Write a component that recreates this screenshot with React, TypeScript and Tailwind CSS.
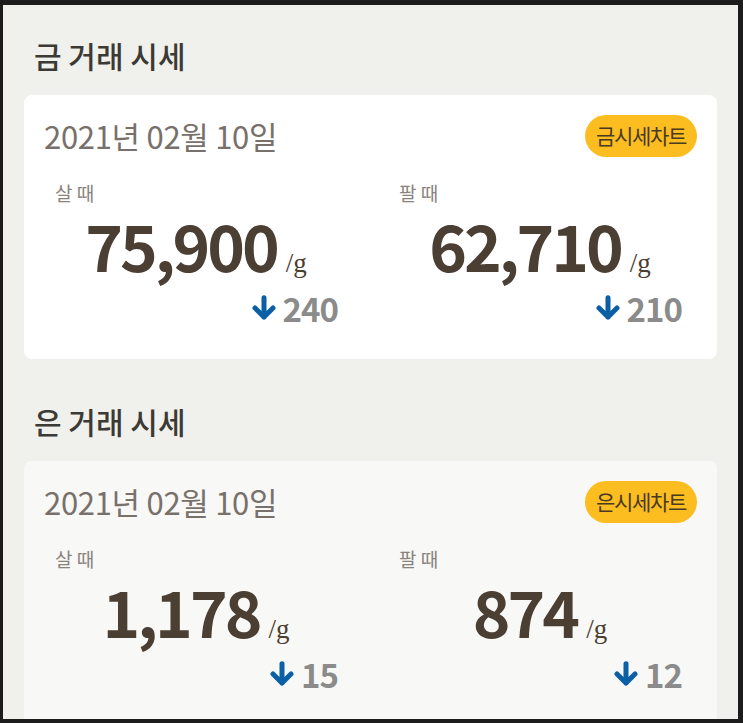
import React from "react";

type Price = {
	label: string;
	value: string;
	change: string;
};

function ArrowDown() {
	return (
		<svg width="24" height="26" viewBox="0 0 24 26" className="shrink-0">
			<path
				d="M12 2.8 V22 M3 13 L12 22 L21 13"
				fill="none"
				stroke="#0b5fa5"
				strokeWidth="5"
				strokeLinecap="round"
				strokeLinejoin="round"
			/>
		</svg>
	);
}

function PriceColumn({ price }: { price: Price }) {
	return (
		<div className="flex flex-col">
			<div className="text-[19px] leading-[22px] text-[#8a837c] pl-[1px]">{price.label}</div>
			<div className="flex items-baseline justify-center mt-[5px] h-[70px]">
				<span className="text-[64px] leading-[70px] font-bold text-[#4b3e33] tracking-[-3px]">
					{price.value}
				</span>
				<span className="ml-[9px] text-[27px] text-[#4b3e33] font-['Liberation_Serif',serif]">/g</span>
			</div>
			<div className="flex items-center justify-end gap-[7px] mt-[11px] h-[36px]">
				<ArrowDown />
				<span className="text-[33px] leading-[36px] font-bold text-[#8b8b8b] tracking-[-1px]">
					{price.change}
				</span>
			</div>
		</div>
	);
}

function MarketSection({
	title,
	badge,
	buy,
	sell,
	cardBg,
	last,
}: {
	title: string;
	badge: string;
	buy: Price;
	sell: Price;
	cardBg: string;
	last?: boolean;
}) {
	return (
		<section className={last ? "" : "mb-[42px]"}>
			<h2 className="text-[30px] leading-[40px] font-medium text-[#3b3a35] pl-[10px] mb-[20px]">{title}</h2>
			<div className={`rounded-[8px] px-5 pt-[20px] pb-[33px] ${cardBg}`}>
				<div className="flex items-center justify-between">
					<div className="text-[31px] leading-[42px] text-[#78706a] tracking-[-0.3px]">2021년 02월 10일</div>
					<div className="h-[42px] px-[11px] rounded-full bg-[#fbbd1f] flex items-center text-[21px] text-[#4a3a22] tracking-[-1.3px]">
						{badge}
					</div>
				</div>
				<div className="grid grid-cols-[284px_284px] gap-x-[60px] pl-[10px] mt-[25px]">
					<PriceColumn price={buy} />
					<PriceColumn price={sell} />
				</div>
			</div>
		</section>
	);
}

export default function App() {
	return (
		<div className="w-[743px] h-[723px] overflow-hidden bg-[#1c1c1c] pt-[5px] pl-[3px] pr-[5px] pb-[4px] font-['Noto_Sans_CJK_KR','Noto_Sans',sans-serif]">
			<div className="h-full overflow-hidden bg-[#f0f0ec] px-[21px] pt-[30px]">
				<MarketSection
					title="금 거래 시세"
					badge="금시세차트"
					buy={{ label: "살 때", value: "75,900", change: "240" }}
					sell={{ label: "팔 때", value: "62,710", change: "210" }}
					cardBg="bg-white"
				/>
				<MarketSection
					title="은 거래 시세"
					badge="은시세차트"
					buy={{ label: "살 때", value: "1,178", change: "15" }}
					sell={{ label: "팔 때", value: "874", change: "12" }}
					cardBg="bg-[#f8f8f7]"
					last
				/>
			</div>
		</div>
	);
}
